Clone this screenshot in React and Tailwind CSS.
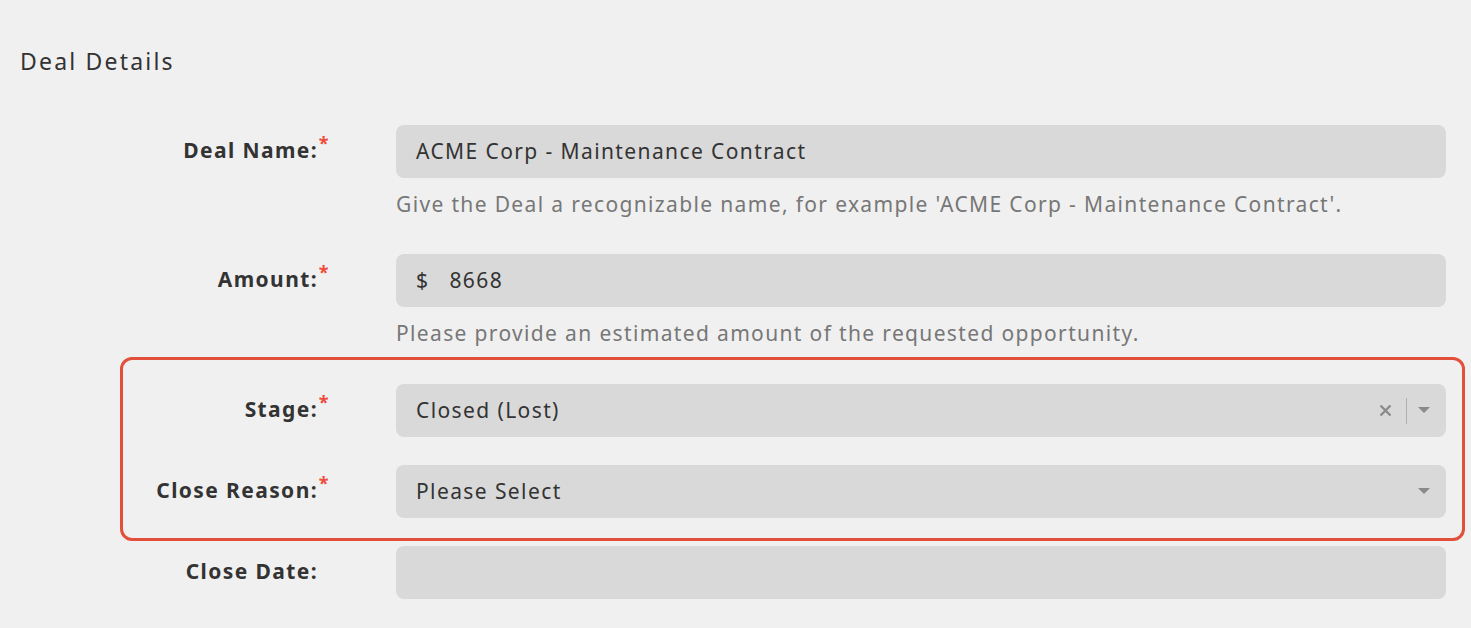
import React from "react";

const FONT = { fontFamily: "'Noto Sans', 'Open Sans', sans-serif" };

const Caret = () => (
  <svg width="12" height="7" viewBox="0 0 12 7" className="block">
    <path d="M0 0 L12 0 L6 6 Z" fill="#8a8a8a" />
  </svg>
);

const Clear = () => (
  <svg width="13" height="13" viewBox="0 0 13 13" className="block">
    <path d="M1.5 1.5 L11.5 11.5 M11.5 1.5 L1.5 11.5" stroke="#8a8a8a" strokeWidth="2.4" strokeLinecap="butt" />
  </svg>
);

const Label = ({ children, required, width }) => (
  <div className={`${width} shrink-0 flex justify-end -mt-[3px]`}>
    <span className="relative text-[21px] leading-[28px] font-bold tracking-[1.4px] text-[#333333] pr-[12px]">
      {children}
      {required && (
        <span className="absolute right-0 -top-[2px] text-[18px] leading-none text-[#ef4b3a]">*</span>
      )}
    </span>
  </div>
);

const Field = ({ children, right }) => (
  <div className="flex-1 h-[53px] rounded-[8px] bg-[#d9d9d9] flex items-center pl-[20px] pr-[16px] text-[21px] tracking-[1.4px] text-[#333333]">
    <div className="flex-1 flex items-center">{children}</div>
    {right}
  </div>
);

export default function App() {
  return (
    <div className="min-h-screen w-full bg-[#f0f0f0] pt-[45px] pb-[30px]" style={FONT}>
      <h2 className="pl-[20px] text-[23px] leading-[32px] tracking-[2.2px] text-[#333333]">Deal Details</h2>

      <div className="mt-[48px]">
        {/* Deal Name */}
        <div className="flex items-center pr-[25px]">
          <Label required width="w-[330px]">Deal Name:</Label>
          <div className="ml-[66px] flex-1 flex">
            <Field>ACME Corp - Maintenance Contract</Field>
          </div>
        </div>
        <div className="ml-[396px] mt-[12px] h-[28px] leading-[28px] text-[21px] tracking-[1.35px] text-[#777777]">
          Give the Deal a recognizable name, for example 'ACME Corp - Maintenance Contract'.
        </div>

        {/* Amount */}
        <div className="flex items-center pr-[25px] mt-[36px]">
          <Label required width="w-[330px]">Amount:</Label>
          <div className="ml-[66px] flex-1 flex">
            <Field>
              <span>$</span>
              <span className="ml-[20px]">8668</span>
            </Field>
          </div>
        </div>
        <div className="ml-[396px] mt-[12px] h-[28px] leading-[28px] text-[21px] tracking-[1.35px] text-[#777777]">
          Please provide an estimated amount of the requested opportunity.
        </div>

        {/* Highlighted group */}
        <div className="ml-[120px] mr-[6px] mt-[10px] border-[3px] border-[#e24f3b] rounded-[12px] pt-[24px] pb-[20px] pr-[16px]">
          <div className="flex items-center">
            <Label required width="w-[207px]">Stage:</Label>
            <div className="ml-[66px] flex-1 flex">
              <Field
                right={
                  <div className="flex items-center">
                    <Clear />
                    <span className="ml-[14px] w-px h-[26px] bg-[#b0b0b0]" />
                    <span className="ml-[11px]"><Caret /></span>
                  </div>
                }
              >
                Closed (Lost)
              </Field>
            </div>
          </div>
          <div className="flex items-center mt-[28px]">
            <Label required width="w-[207px]">Close Reason:</Label>
            <div className="ml-[66px] flex-1 flex">
              <Field right={<Caret />}>Please Select</Field>
            </div>
          </div>
        </div>

        {/* Close Date */}
        <div className="flex items-center pr-[25px] mt-[5px]">
          <Label width="w-[330px]">Close Date:</Label>
          <div className="ml-[66px] flex-1 flex">
            <Field />
          </div>
        </div>
      </div>
    </div>
  );
}
